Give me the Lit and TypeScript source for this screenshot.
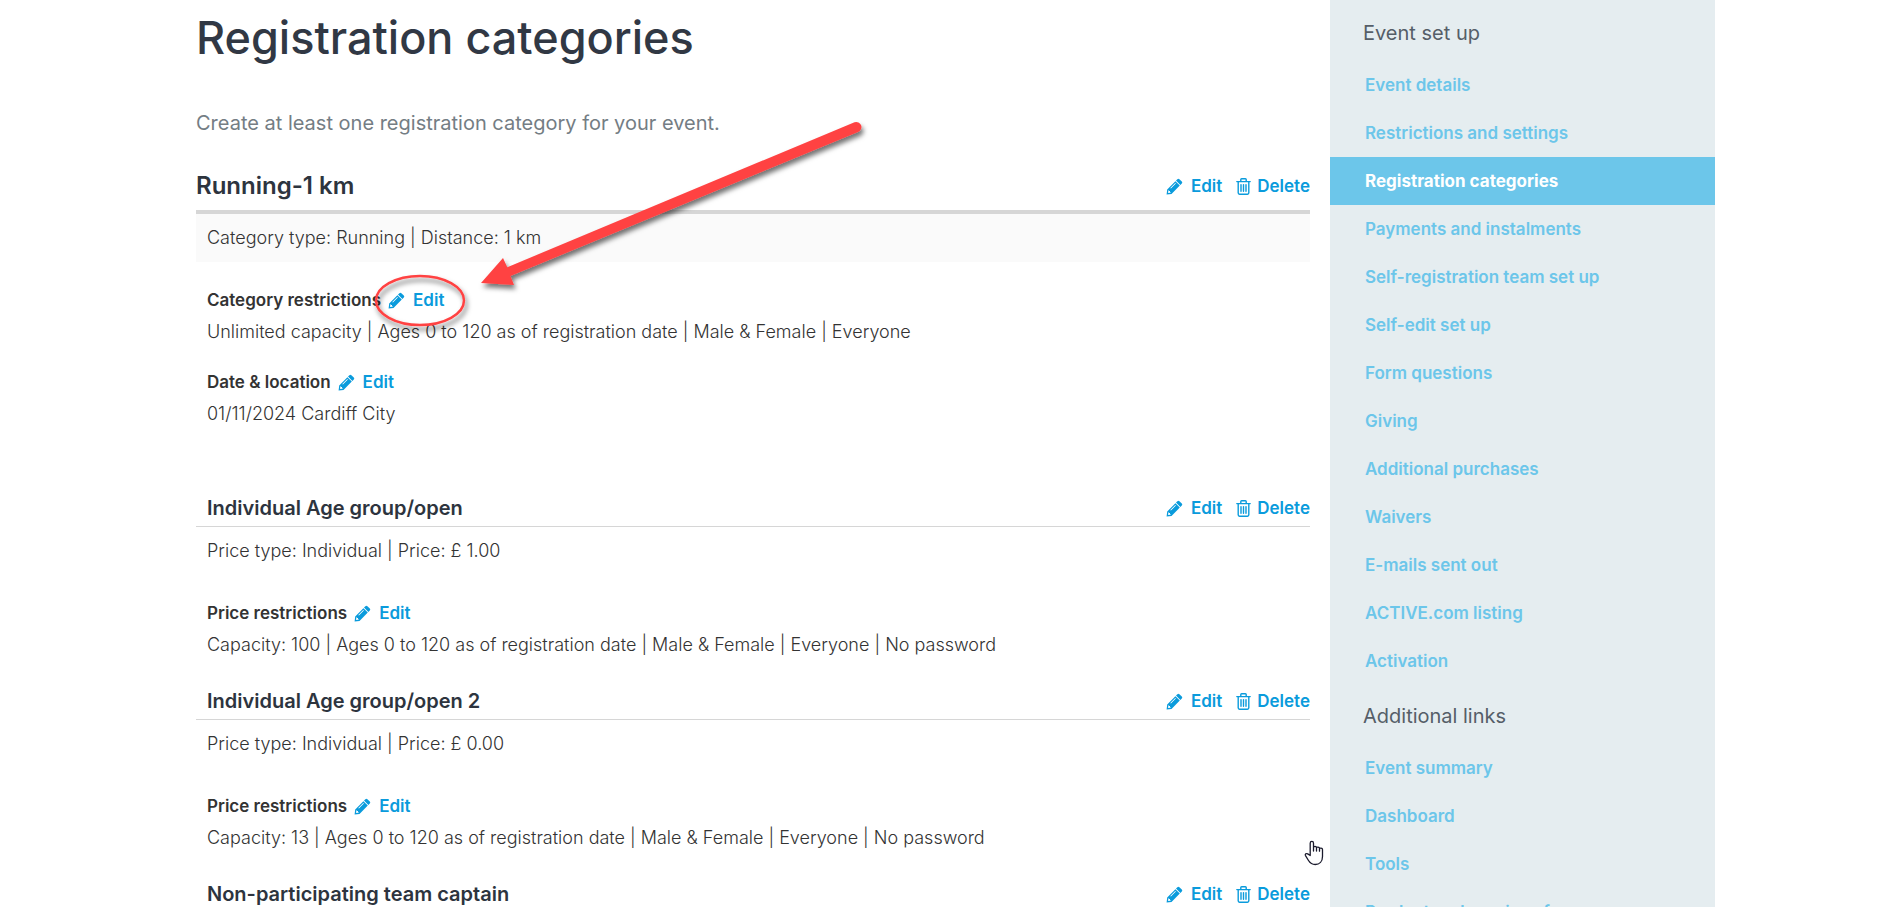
import { LitElement, html, css, svg, nothing } from "lit";
import { customElement, property } from "lit/decorators.js";
import { classMap } from "lit/directives/class-map.js";

interface Detail {
  label: string;
  value: string;
}

interface PriceType {
  name: string;
  meta: string;
  details: Detail[];
}

const CATEGORY = {
  name: "Running-1 km",
  meta: "Category type: Running | Distance: 1 km",
  details: [
    {
      label: "Category restrictions",
      value: "Unlimited capacity | Ages 0 to 120 as of registration date | Male & Female | Everyone",
    },
    { label: "Date & location", value: "01/11/2024 Cardiff City" },
  ] as Detail[],
};

const PRICES: PriceType[] = [
  {
    name: "Individual Age group/open",
    meta: "Price type: Individual | Price: £ 1.00",
    details: [
      {
        label: "Price restrictions",
        value: "Capacity: 100 | Ages 0 to 120 as of registration date | Male & Female | Everyone | No password",
      },
    ],
  },
  {
    name: "Individual Age group/open 2",
    meta: "Price type: Individual | Price: £ 0.00",
    details: [
      {
        label: "Price restrictions",
        value: "Capacity: 13 | Ages 0 to 120 as of registration date | Male & Female | Everyone | No password",
      },
    ],
  },
  { name: "Non-participating team captain", meta: "", details: [] },
];

const SECTIONS = [
  {
    title: "Event set up",
    links: [
      "Event details",
      "Restrictions and settings",
      "Registration categories",
      "Payments and instalments",
      "Self-registration team set up",
      "Self-edit set up",
      "Form questions",
      "Giving",
      "Additional purchases",
      "Waivers",
      "E-mails sent out",
      "ACTIVE.com listing",
      "Activation",
    ],
  },
  {
    title: "Additional links",
    links: ["Event summary", "Dashboard", "Tools", "Product and services form"],
  },
];

const pencil = svg`
  <path fill="currentColor" d="M11.4 1.2a1.4 1.4 0 0 1 2 0l2.4 2.4a1.4 1.4 0 0 1 0 2l-1.4 1.4-4.4-4.4z"/>
  <path fill="currentColor" fill-rule="evenodd" d="M9.4 3.2l4.400 4.400-8.300 8.300-4.900.6.600-4.900zM9.300 5L4.300 10l.6.6 5-5zM2.300 12.700l-.2 2.200 2.200-.2.6-.6H4v-1H3v-1z"/>`;

const trash = svg`
  <path fill="none" stroke="currentColor" stroke-width="1.4" stroke-linejoin="round" stroke-linecap="round"
    d="M.8 3.6h13.4M4.8 3.4V1.6c0-.5.3-.8.8-.8h3.8c.5 0 .8.3.8.8v1.8M2.2 3.8v11c0 .8.5 1.4 1.3 1.4h8c.8 0 1.300-.6 1.300-1.400v-11M5 6.600v6.600M7.500 6.600v6.600M10 6.600v6.600"/>`;

@customElement("action-link")
class ActionLink extends LitElement {
  @property() kind = "edit";

  static styles = css`
    :host {
      display: flex;
    }
    .link {
      display: flex;
      align-items: center;
      gap: 8px;
      color: #0a9bdc;
      font-size: 17px;
      font-weight: 600;
      line-height: 24px;
      text-decoration: none;
    }
    .link.delete {
      gap: 6px;
    }
    .icon {
      display: block;
    }
  `;

  render() {
    const del = this.kind === "delete";
    return html`<a class=${classMap({ link: true, delete: del })} href="#">
      <svg class="icon" width=${del ? 15 : 17} height="17" viewBox=${del ? "0 0 15 17" : "0 0 17 17"} aria-hidden="true">
        ${del ? trash : pencil}
      </svg>${del ? "Delete" : "Edit"}</a>`;
  }
}

@customElement("detail-list")
class DetailList extends LitElement {
  @property({ attribute: false }) details: Detail[] = [];

  static styles = css`
    .list {
      display: grid;
      gap: 18px;
      margin: 0;
      padding: 22px 11px 0;
      line-height: 32px;
    }
    .label {
      display: flex;
      align-items: center;
      gap: 7px;
      font-size: 17px;
      font-weight: 600;
    }
    .value {
      margin: 0;
      font-size: 18px;
      font-weight: 300;
    }
  `;

  render() {
    return html`<dl class="list">
      ${this.details.map(
        (d) => html`<div>
          <dt class="label">${d.label}<action-link></action-link></dt>
          <dd class="value">${d.value}</dd>
        </div>`
      )}
    </dl>`;
  }
}

@customElement("side-nav")
class SideNav extends LitElement {
  static styles = css`
    .nav {
      padding-top: 19px;
    }
    .title {
      margin: 0;
      padding-left: 33px;
      font-size: 20px;
      font-weight: 400;
      line-height: 28px;
      color: #555e68;
    }
    .links {
      margin: 0 0 17px;
      padding: 14px 0 0;
      list-style: none;
    }
    .link {
      display: block;
      padding-left: 35px;
      font-size: 17px;
      font-weight: 600;
      line-height: 48px;
      color: #6cc6ea;
      text-decoration: none;
    }
    .link.current {
      background: #6cc6ea;
      color: #fff;
      font-weight: 700;
    }
  `;

  render() {
    return html`<nav class="nav">
      ${SECTIONS.map(
        (s) => html`<h2 class="title">${s.title}</h2>
          <ul class="links">
            ${s.links.map((l) => {
              const current = l === "Registration categories";
              return html`<li>
                <a class=${classMap({ link: true, current })} href="#" aria-current=${current ? "page" : nothing}>${l}</a>
              </li>`;
            })}
          </ul>`
      )}
    </nav>`;
  }
}

@customElement("app-root")
class AppRoot extends LitElement {
  static styles = css`
    :host {
      display: block;
      position: relative;
      height: 100vh;
      overflow: hidden;
      background: #fff;
      color: #333;
      font-family: Inter, "Liberation Sans", sans-serif;
    }
    .page {
      display: grid;
      grid-template-columns: minmax(0, 1fr) 385px;
      column-gap: 20px;
      padding: 0 173px 0 196px;
    }
    .main {
      padding-top: 10px;
    }
    .side {
      background: #e5edf0;
    }
    .title {
      margin: 0;
      font-size: 45px;
      font-weight: 500;
      line-height: 56px;
      color: #313844;
    }
    .intro {
      margin: 43px 0 31px;
      font-size: 20px;
      font-weight: 400;
      line-height: 28px;
      color: #747d84;
    }
    .head {
      display: flex;
      justify-content: space-between;
      align-items: center;
      color: #2d343e;
    }
    .head.category {
      padding-bottom: 6px;
      border-bottom: 4px solid #d6d6d6;
    }
    .head.price {
      padding: 0 0 4px 11px;
      border-bottom: 1px solid #d6d6d6;
    }
    .name {
      margin: 0;
      font-size: 20px;
      font-weight: 600;
      line-height: 28px;
    }
    .category .name {
      font-size: 24px;
      line-height: 36px;
    }
    .actions {
      display: flex;
      gap: 14px;
    }
    .meta {
      margin: 0;
      padding: 8px 11px;
      font-size: 18px;
      font-weight: 300;
      line-height: 32px;
    }
    .meta.shaded {
      background: #fafafa;
    }
    .prices {
      display: grid;
      gap: 26px;
      padding-top: 64px;
    }
    .markup {
      position: absolute;
      left: 360px;
      top: 110px;
      pointer-events: none;
    }
    .pointer {
      position: absolute;
      left: 1304px;
      top: 840px;
      pointer-events: none;
    }
  `;

  private actions() {
    return html`<div class="actions">
      <action-link></action-link>
      <action-link kind="delete"></action-link>
    </div>`;
  }

  render() {
    return html`
      <div class="page">
        <main class="main">
          <h1 class="title">Registration categories</h1>
          <p class="intro">Create at least one registration category for your event.</p>
          <section>
            <header class="head category">
              <h2 class="name">${CATEGORY.name}</h2>
              ${this.actions()}
            </header>
            <p class="meta shaded">${CATEGORY.meta}</p>
            <detail-list .details=${CATEGORY.details}></detail-list>
            <div class="prices">
              ${PRICES.map(
                (p) => html`<section>
                  <header class="head price">
                    <h3 class="name">${p.name}</h3>
                    ${this.actions()}
                  </header>
                  ${p.meta ? html`<p class="meta">${p.meta}</p>` : nothing}
                  ${p.details.length ? html`<detail-list .details=${p.details}></detail-list>` : nothing}
                </section>`
              )}
            </div>
          </section>
        </main>
        <aside class="side"><side-nav></side-nav></aside>
      </div>
      <svg class="markup" width="520" height="230" viewBox="360 110 520 230" aria-hidden="true">
        <defs>
          <filter id="shadow" x="-10%" y="-10%" width="120%" height="130%">
            <feDropShadow dx="2" dy="4" stdDeviation="2.5" flood-color="#000" flood-opacity=".55" />
          </filter>
        </defs>
        <g filter="url(#shadow)">
          <path
            fill="#ff4343"
            d="M481 283L503 258L507.3 267.2L854.5 122.2A5 5 0 0 1 858 132L510.5 276L514 285Z"
          />
          <ellipse cx="420" cy="300.5" rx="44" ry="24.5" fill="none" stroke="#ff4343" stroke-width="2.5" />
        </g>
      </svg>
      <svg class="pointer" width="20" height="26" viewBox="0 0 20 26" aria-hidden="true">
        <path
          fill="#fff"
          stroke="#1a1a2c"
          stroke-width="1.3"
          stroke-linejoin="round"
          d="M6.2 15.5V3.2c0-2.4 3.3-2.4 3.3 0V11V7.5c0-1.4 3-1.4 3 0V11V8c0-1.4 3-1.2 3 .2V11.2V9c0-1.4 3-1.2 3 .4v7.1c0 5-3 8-7.3 8c-3.2 0-5-1.3-6.7-4L1.500 15.600c-.8-1.500.7-2.600 2.200-1.700z"
        />
      </svg>
    `;
  }
}
